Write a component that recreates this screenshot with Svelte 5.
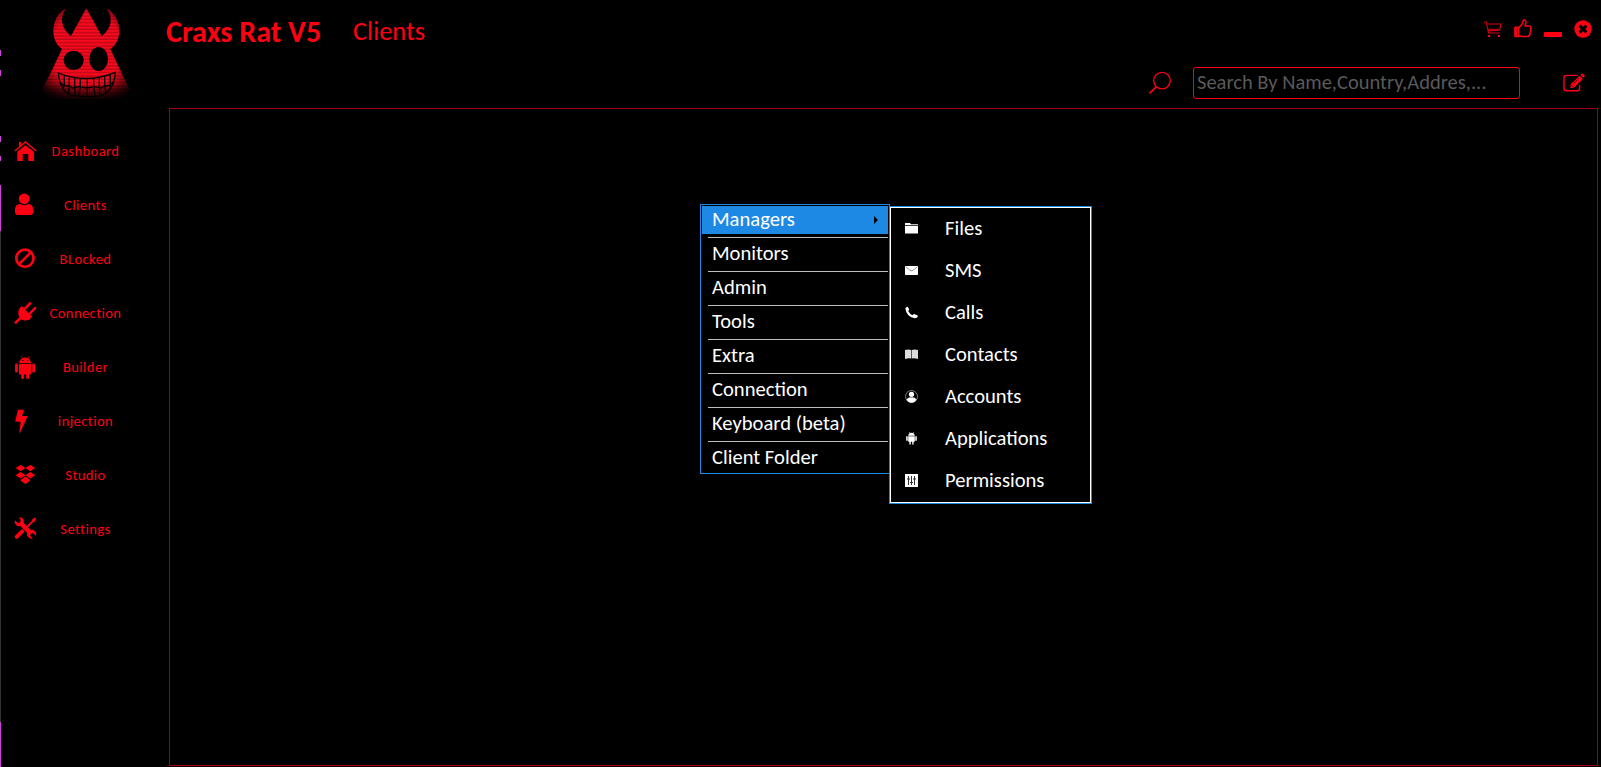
<script>
  const nav = ['Dashboard', 'Clients', 'BLocked', 'Connection', 'Builder', 'injection', 'Studio', 'Settings'];
  const menu = ['Managers', 'Monitors', 'Admin', 'Tools', 'Extra', 'Connection', 'Keyboard (beta)', 'Client Folder'];
  const submenu = ['Files', 'SMS', 'Calls', 'Contacts', 'Accounts', 'Applications', 'Permissions'];
  const edgeMarks = [[50, 6], [70, 6], [136, 6], [156, 5], [185, 46], [722, 45]];
</script>

<div class="window">
  <div class="edge">
    {#each edgeMarks as [top, height]}
      <i style="top:{top}px;height:{height}px"></i>
    {/each}
  </div>

  <aside>
    <svg class="logo" viewBox="0 0 330 330" width="110" height="110">
      <defs>
        <pattern id="scan" width="330" height="10" patternUnits="userSpaceOnUse">
          <rect width="330" height="10" fill="#f8091d" />
          <rect y="6" width="330" height="4" fill="#b90818" />
        </pattern>
        <radialGradient id="glow" gradientUnits="userSpaceOnUse" cx="169" cy="150" r="175">
          <stop offset=".62" stop-color="#000" stop-opacity="0" />
          <stop offset="1" stop-color="#000" stop-opacity=".9" />
        </radialGradient>
        <linearGradient id="floor" x1="0" y1="0" x2="0" y2="1">
          <stop offset=".82" stop-color="#000" stop-opacity="0" />
          <stop offset="1" stop-color="#000" stop-opacity=".9" />
        </linearGradient>
      </defs>
      <path fill="url(#scan)" d="M108 25C84 40 70 64 70 92c0 24 10 44 26 55L40 265q12 32 40 32h178q30 0 38-32L241 147c17-11 27-31 27-55 0-28-14-52-38-67 20 29 16 61-15 83L169 25l-46 83C93 86 88 53 108 25z" />
      <path fill="url(#glow)" d="M108 25C84 40 70 64 70 92c0 24 10 44 26 55L40 265q12 32 40 32h178q30 0 38-32L241 147c17-11 27-31 27-55 0-28-14-52-38-67 20 29 16 61-15 83L169 25l-46 83C93 86 88 53 108 25z" />
      <rect x="30" y="20" width="280" height="280" fill="url(#floor)" />
      <ellipse cx="131" cy="181" rx="30" ry="29" fill="#000" />
      <ellipse cx="206" cy="177" rx="28" ry="36" fill="#000" />
      <path fill="none" stroke="#000" stroke-width="4" d="M85 219q85 34 171-2c-2 38-19 67-49 71q-38 5-75-1c-30-6-44-30-47-68zM88 248l14 8 14 2 12 6 20-4 22 4 22-4 20 4 14-7 12-1 14-12M103 227v28l-5 15M118 231v27l-3 25M134 235v28l2 24M151 236v24l-5 27M172 237v51M191 236v25l5 27M208 234v28l2 26M224 230v27l4 24M241 225v23l-1 18" />
    </svg>

    <nav>
      {#each nav as label, i}
        <div class="item">
          <svg viewBox="0 0 24 24" width="24" height="24">
            {#if i === 0}
              <path d="M3.3 22v-9.2l8-6.6 8.7 6.6V22h-5.7v-6.9H8.7V22zM5 3h2v4L5 8.8z" />
              <path class="line" stroke-width="1.3" d="M.8 12 11.4 2.9 22.2 12" />
            {:else if i === 1}
              <circle cx="10.2" cy="5.8" r="5.4" />
              <path d="M1 16.5q0-5.3 5.2-5.5 4 2.4 8 0 5 .2 5 5.5v2.5q0 3-3 3H4q-3 0-3-3z" />
            {:else if i === 2}
              <circle class="line" stroke-width="2.7" cx="10.9" cy="11.3" r="8.6" />
              <path class="line" stroke-width="2.6" d="m5 17.2 12-12" />
            {:else if i === 3}
              <path d="M7.6 4.9 18.2 15.5q-2.7 4.3-7.4 3.9-1.7-.2-3.1-1L5.2 16q-2.8-6.5 2.4-11.1z" />
              <path class="line" stroke-width="2.6" stroke-linecap="round" d="m1.8 21.5 4.500-4.400M11.200 7.300l4.900-5M16.200 12.200l4.900-5" />
            {:else if i === 4}
              <path d="M5 8.2Q5.2 4.8 8 3.2L6.9 1.3l.5-.3 1.2 1.9q2.5-.9 5 0L14.8 1l.5.3-1.1 1.9Q17 4.8 17.3 8.2zM8.2 5h1.1v1.1H8.2zm5 0h1.1v1.1h-1.1zM5 9h12.3v9.4q0 1-1 1H15v3.5q0 1-1.4 1t-1.4-1v-3.5H10v3.5q0 1-1.4 1t-1.4-1v-3.5H6q-1 0-1-1z" fill-rule="evenodd" />
              <rect x="1.1" y="8.5" width="2.8" height="9" rx="1.3" /><rect x="18.2" y="8.5" width="2.8" height="9" rx="1.3" />
            {:else if i === 5}
              <path d="M4 .7h5.9L8 6.9h5.8L6 23.8H5.2l1.5-10.9-5.5-.5z" />
            {:else if i === 6}
              <path d="M6.6 2 11.4 5 6.6 8.2 1.6 5zM16.2 2l5 3-5 3.2L11.4 5zM6.6 9l4.8 3.3-4.8 3.2-5-3.2zM16.2 9l5 3.3-5 3.2-4.8-3.2zM11.4 13.4l4.7 3.3v1.1l-4.7 3.1-4.8-3.1v-1.1z" />
            {:else}
              <path d="M5.1.2q3.5-.3 4.6 2.9.3 1.5-.1 2.6l7 7q3.7-.5 5.1 2.6.6 1.6.1 3.4l-2.8-2.7-2.3.7-.5 2.2 2.6 2.7q-4 .7-5.5-2.5-.6-1.500-.1-3.200L6.4 9Q2.6 9.5 1 6.4q-.5-1.700 0-3.100L3.8 6l2.300-.6.6-2.300z" />
              <path d="M1.2 18.4 8 11.9l2.5 2.5-6.4 6.9q-1.5 1-2.7 0-1.3-1.3-.2-2.9zM12.6 8.8l5-4.6.5-1.6L21 .6l1.3 1.2-1.9 3-1.6.6-4.8 4.8z" />
            {/if}
          </svg>
          <span>{label}</span>
        </div>
      {/each}
    </nav>
  </aside>

  <main>
    <header>
      <h1>Craxs Rat V5</h1>
      <h2>Clients</h2>
      <div class="controls">
        <svg viewBox="0 0 20 20" width="20" height="20">
          <path class="line" stroke-width="1.1" opacity=".85" d="M1 3h2.2L5.6 14H17M4 5h14l-1.4 6.2-11.4.7M5 10.2h11.7" />
          <path d="M5 16h2v2H5zM15 16h2v2h-2z" />
        </svg>
        <svg viewBox="0 0 20 20" width="20" height="20">
          <path class="line" stroke-width="1.5" stroke-linejoin="round" d="M2 8.200h3.600v9.400H2zM5.600 9l3.800-4.200 1-3.800q2.700-.3 2.600 2.400l-1 3.700h4.300q2.200.4 1.300 2.300.9 1.400-.1 2.400.4 1.500-.6 2.500.3 2.900-2.400 3.200H10q-2.200-.1-4.400-1" />
          <rect x="1.800" y="8.500" width="2.200" height="9" />
        </svg>
        <i class="minimise"></i>
        <svg viewBox="0 0 20 20" width="20" height="20">
          <circle cx="10" cy="10" r="8.7" />
          <path d="m6.6 6.6 6.8 6.8m0-6.8-6.8 6.8" stroke="#000" stroke-width="3" />
        </svg>
      </div>
    </header>

    <div class="tools">
      <svg class="find" viewBox="0 0 24 24" width="24" height="24">
        <circle class="line" stroke-width="1.3" cx="14" cy="9.6" r="8.3" />
        <path class="line" stroke-width="1.7" d="m1.5 22.4 6.8-6.5" />
      </svg>
      <div class="search">Search By Name,Country,Addres,...</div>
      <svg class="edit" viewBox="0 0 24 20" width="24" height="20">
        <path class="line" stroke-width="1.4" d="M15.6 2.4H4.5Q2 2.4 2 5v10.2q0 2.6 2.5 2.6h10.7q2.4 0 2.4-2.6V12" />
        <path d="m8.6 11.3 9-8.6 3.2 3.2-8.9 8.8-3.4.6zM18.5 1.9l1.2-1.1q.6-.5 1.1 0l1.8 1.8q.5.6 0 1.1l-1.1 1.2z" />
        <path d="m9.2 12 1.9 1.9m.2-3.2 5.6-5.4" stroke="#000" stroke-width=".7" />
      </svg>
    </div>

    <section class="panel"></section>
  </main>

  <div class="menu">
    {#each menu as label, i}
      <div class="entry" class:active={i === 0}>
        <span>{label}</span>
        {#if i === 0}<b></b>{/if}
      </div>
    {/each}
  </div>

  <div class="submenu">
    {#each submenu as label, i}
      <div class="choice">
        <svg viewBox="0 0 13 13" width="13" height="13">
          {#if i === 0}
            <path d="M0 1h5l1 1.2h7v1H0zM0 4h13v7.5H0z" />
          {:else if i === 1}
            <rect y="2" width="13" height="9" rx=".8" />
            <path d="m1 3 4 3.3q1.5 1 3 0L12 3" fill="none" stroke="#777" stroke-width=".8" />
          {:else if i === 2}
            <path d="M.3 2.2 2 .8q.8-.3 1.1.4l1 2.2q.1.7-.9 1.6 1.5 3 4.3 4.2 1-1.4 1.7-1.3l3 1.4q.9.4.6 1.2-.8 2-3 1.8Q1.5 11 .3 2.2z" />
          {:else if i === 3}
            <path fill="#ddd" d="M0 2q3.5-1.2 6.2 0v8.5Q3.5 9.7 0 11zM6.8 2Q9.5.8 13 2v9q-3.5-1.3-6.2-.5z" />
          {:else if i === 4}
            <circle cx="6.5" cy="6.5" r="6" fill="none" stroke="#999" stroke-width=".8" />
            <circle cx="6.5" cy="4.3" r="2.6" /><path d="M1.5 9.5Q3.5 7 6.5 7.4 9.5 7 11.5 9.5 9.7 12.7 6.5 12.7T1.5 9.5z" />
          {:else if i === 5}
            <path d="M3.200 3.800Q3.300 2 4.700 1.200L4 .3l.4-.2.8.9q1.300-.4 2.600 0l.8-.9.4.2-.7.9q1.400.8 1.500 2.600zM3.200 4.200h6.600v5.600H8.600v2.600H7.200V9.800H5.800v2.600H4.400V9.800H3.200zM1.200 4.300h1.500v4.500H1.200zM10.300 4.300h1.500v4.500h-1.500z" />
          {:else}
            <rect width="13" height="13" />
            <path d="M3.5 2v9m3-9v9m3-9v9M2 5h3M5 8.5h3M8 5h3" stroke="#333" stroke-width="1" />
          {/if}
        </svg>
        <span>{label}</span>
      </div>
    {/each}
  </div>
</div>

<style>
  :global(body) { background: #000; overflow: hidden; }
  .window {
    position: relative; display: flex; box-sizing: border-box; width: 1601px; height: 767px;
    overflow: hidden; background: #000; color: #ff0013; font-family: Carlito, Calibri, Lato, sans-serif;
  }
  svg { display: block; flex: none; fill: currentColor; }
  .line { fill: none; stroke: currentColor; }
  .edge { position: absolute; inset: 0 auto 0 0; width: 1px; background: linear-gradient(#000 231px, #333 231px); }
  .edge i { position: absolute; left: 0; width: 1px; background: #d63be0; }

  aside { width: 169px; flex: none; }
  .logo { margin-left: 30px; }
  nav { padding-top: 14px; }
  .item { display: flex; align-items: center; height: 54px; padding-left: 14px; }
  .item svg { margin-bottom: 1px; }
  .item span { width: 95px; text-align: center; font-size: 14.5px; letter-spacing: .45px; font-variant-ligatures: none; padding-bottom: 1px; }

  main { flex: 1; min-width: 0; display: flex; flex-direction: column; }
  header { display: flex; align-items: center; height: 62px; }
  h1 { margin: 0; width: 184px; font-size: 30.2px; font-weight: 700; white-space: nowrap; text-indent: -3px; }
  h2 { margin: 0; font-size: 26.4px; font-weight: 400; }
  .controls { display: flex; align-items: center; gap: 10px; margin-left: auto; padding-right: 8px; height: 20px; margin-bottom: 5px; }
  .minimise { width: 18px; height: 5px; border-radius: 1px; background: #ff0013; margin: 11px 1px 0 1px; }
  .tools { display: flex; align-items: center; height: 46px; }
  .find { margin: 0 0 5px 979px; }
  .search {
    box-sizing: border-box; width: 327px; height: 32px; margin: 0 43px 4px 21px; padding-left: 3px;
    border: 1px solid #ff0013; border-radius: 3px; color: #5a5a5a; font-size: 20.5px; line-height: 29px; white-space: nowrap;
  }
  .edit { margin: 0 0 4px -1px; }
  .panel { flex: 1; margin: 0 3px 1px 0; border: 1px solid #a0000e; }

  .menu {
    position: absolute; left: 700px; top: 204px; box-sizing: border-box; width: 190px; height: 270px;
    padding: 1px; border: 1px solid #1e88e5; background: #000; color: #fff; font-size: 20.6px;
  }
  .entry { height: 28px; display: flex; align-items: center; padding-left: 10px; }
  .entry span { padding-bottom: 2px; }
  .entry + .entry { margin-left: 6px; padding: 2px 0 3px 4px; border-top: 1px solid #bdbdbd; }
  .entry.active { background: #1e88e5; margin-bottom: 3px; justify-content: space-between; }
  .entry b { margin-right: 10px; border: solid transparent; border-width: 4px 0 4px 4px; border-left-color: #000; }

  .submenu {
    position: absolute; left: 889px; top: 206px; box-sizing: border-box; width: 203px; height: 298px; padding-top: 1px;
    border: 1px solid #1e88e5; outline: 1px solid #fff; outline-offset: -2px; background: #000; color: #fff; font-size: 20.6px;
  }
  .choice { display: flex; align-items: center; height: 42px; padding-left: 15px; gap: 27px; }
  .choice svg { margin-bottom: 1px; }
  .choice span { padding-bottom: 2px; }
</style>
